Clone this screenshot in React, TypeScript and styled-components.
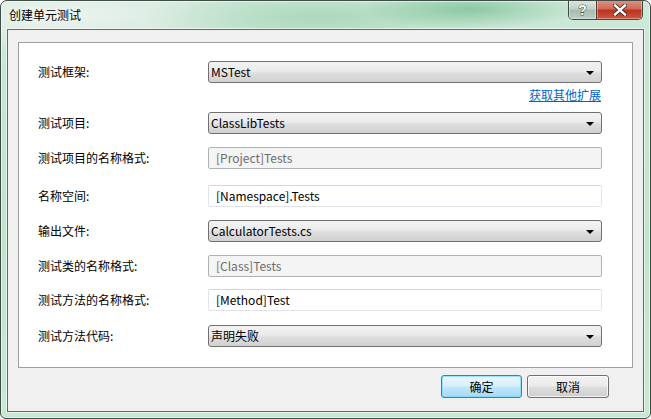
import React from 'react';
import styled, { createGlobalStyle } from 'styled-components';

const Global = createGlobalStyle`
  html, body { margin: 0; padding: 0; background: #ffffff; }
  body { font-family: "Noto Sans CJK SC", "Microsoft YaHei", sans-serif; font-size: 12px; }
  * { box-sizing: border-box; }
`;

const Window = styled.div`
  width: 651px;
  height: 419px;
  display: flex;
  flex-direction: column;
  border: 1px solid #3e4d46;
  border-radius: 7px 7px 6px 6px;
  overflow: hidden;
  padding: 0 6px 6px;
  background:
    radial-gradient(ellipse 110px 20px at 470px 8px, rgba(100, 180, 130, 0.6), transparent),
    radial-gradient(ellipse 180px 30px at 320px 16px, rgba(140, 200, 162, 0.5), transparent),
    radial-gradient(ellipse 200px 40px at 60px 14px, rgba(240, 244, 242, 0.9), transparent),
    linear-gradient(180deg, #cde9d8 0%, #c6e6d2 20%, #c1e4cd 60%, #c8e8d4 100%);
  box-shadow: inset 0 0 0 1px rgba(255, 255, 255, 0.55);
`;

const TitleBar = styled.div`
  height: 28px;
  display: flex;
  align-items: flex-start;
  justify-content: space-between;
`;

const Title = styled.div`
  padding: 6px 0 0 2px;
  font-size: 12px;
  line-height: 16px;
  color: #000;
  text-shadow: 0 0 6px rgba(255, 255, 255, 0.9);
`;

const Caption = styled.div`
  display: flex;
  margin-right: 1px;
  margin-top: -1px;
  border: 1px solid #3f4a45;
  border-top: none;
  border-radius: 0 0 5px 5px;
  overflow: hidden;
  height: 20px;
`;

const CapButton = styled.div<{ $kind: 'help' | 'close' }>`
  display: flex;
  align-items: center;
  justify-content: center;
  height: 100%;
  width: ${(p) => (p.$kind === 'close' ? '46px' : '27px')};
  border-left: ${(p) => (p.$kind === 'close' ? '1px solid #5a3630' : 'none')};
  background: ${(p) =>
    p.$kind === 'close'
      ? 'linear-gradient(180deg, #e19484 0%, #d06a58 45%, #b9341f 55%, #cc5641 100%)'
      : 'linear-gradient(180deg, #dfe7e3 0%, #c2d2c9 45%, #a6bcaf 55%, #bcd0c4 100%)'};
  box-shadow: inset 0 0 0 1px rgba(255, 255, 255, 0.35);
`;

const HelpGlyph = styled.span`
  font-family: "Liberation Sans", Arial, sans-serif;
  font-weight: bold;
  font-size: 14px;
  line-height: 14px;
  color: #ffffff;
  -webkit-text-stroke: 1px #3f4b45;
  paint-order: stroke fill;
`;

const Client = styled.div`
  flex: 1;
  display: flex;
  flex-direction: column;
  border: 1px solid #5d6c65;
  background: #f0f0f0;
  padding: 12px 10px 13px;
  box-shadow: 0 0 0 1px rgba(255, 255, 255, 0.6);
`;

const Panel = styled.div`
  flex: 1;
  background: #ffffff;
  border: 1px solid #a0a0a0;
  padding: 18px 30px 0 19px;
  display: flex;
  flex-direction: column;
`;

const Row = styled.div<{ $mt: number }>`
  display: flex;
  align-items: center;
  height: 22px;
  margin-top: ${(p) => p.$mt}px;
`;

const Label = styled.div`
  width: 170px;
  flex: none;
  color: #000;
  font-size: 12px;
  line-height: 16px;
`;

const Select = styled.div`
  flex: 1;
  height: 22px;
  display: flex;
  align-items: center;
  justify-content: space-between;
  padding: 0 7px 0 2px;
  border: 1px solid #707070;
  border-radius: 3px;
  background: linear-gradient(180deg, #f3f3f3 0%, #ebebeb 45%, #dedede 55%, #d1d1d1 100%);
  color: #000;
  font-size: 12px;
  line-height: 16px;
`;

const Arrow = styled.span`
  width: 0;
  height: 0;
  border-left: 4px solid transparent;
  border-right: 4px solid transparent;
  border-top: 4px solid #000;
  margin-top: 1px;
`;

const Input = styled.div<{ $disabled?: boolean }>`
  flex: 1;
  height: 22px;
  display: flex;
  align-items: center;
  padding: 0 7px;
  font-size: 12px;
  line-height: 16px;
  border: 1px solid ${(p) => (p.$disabled ? '#adb2b5' : '#e2e3ea')};
  border-top-color: ${(p) => (p.$disabled ? '#adb2b5' : '#d5d7dc')};
  border-radius: 2px;
  background: ${(p) => (p.$disabled ? '#f4f4f4' : '#ffffff')};
  color: ${(p) => (p.$disabled ? '#6d6d6d' : '#000000')};
`;

const LinkRow = styled.div`
  display: flex;
  justify-content: flex-end;
  height: 18px;
  margin-top: 3px;
  align-items: center;
`;

const Link = styled.a`
  color: #0066cc;
  text-decoration: underline;
  font-size: 12px;
  line-height: 16px;
  margin-right: 1px;
`;

const Footer = styled.div`
  display: flex;
  justify-content: flex-end;
  gap: 5px;
  margin-top: 7px;
  padding-right: 24px;
`;

const Button = styled.div<{ $primary?: boolean }>`
  width: ${(p) => (p.$primary ? '81px' : '82px')};
  height: 23px;
  display: flex;
  align-items: center;
  justify-content: center;
  border-radius: 3px;
  font-size: 12px;
  color: #000;
  border: 1px solid ${(p) => (p.$primary ? '#3c7fb1' : '#707070')};
  background: ${(p) =>
    p.$primary
      ? 'linear-gradient(180deg, #eaf6fd 0%, #d9f0fc 45%, #bee6fd 55%, #a7d9f5 100%)'
      : 'linear-gradient(180deg, #f2f2f2 0%, #ebebeb 45%, #dddddd 55%, #cfcfcf 100%)'};
  box-shadow: inset 0 0 0 1px ${(p) => (p.$primary ? 'rgba(120, 220, 255, 0.7)' : 'rgba(255,255,255,0.7)')};
`;

export default function App() {
  return (
    <>
      <Global />
      <Window>
        <TitleBar>
          <Title>创建单元测试</Title>
          <Caption>
            <CapButton $kind="help">
              <HelpGlyph>?</HelpGlyph>
            </CapButton>
            <CapButton $kind="close">
              <svg width="14" height="12" viewBox="0 0 14 12">
                <path
                  d="M2 1.5 L7 6 L12 1.5 M2 10.5 L7 6 L12 10.5"
                  stroke="#3b2a26"
                  strokeWidth="4.2"
                  fill="none"
                  strokeLinecap="square"
                />
                <path
                  d="M2 1.5 L7 6 L12 1.5 M2 10.5 L7 6 L12 10.5"
                  stroke="#ffffff"
                  strokeWidth="2.4"
                  fill="none"
                  strokeLinecap="square"
                />
              </svg>
            </CapButton>
          </Caption>
        </TitleBar>
        <Client>
          <Panel>
            <Row $mt={0}>
              <Label>测试框架:</Label>
              <Select>
                MSTest
                <Arrow />
              </Select>
            </Row>
            <LinkRow>
              <Link>获取其他扩展</Link>
            </LinkRow>
            <Row $mt={8}>
              <Label>测试项目:</Label>
              <Select>
                ClassLibTests
                <Arrow />
              </Select>
            </Row>
            <Row $mt={13}>
              <Label>测试项目的名称格式:</Label>
              <Input $disabled>[Project]Tests</Input>
            </Row>
            <Row $mt={16}>
              <Label>名称空间:</Label>
              <Input>[Namespace].Tests</Input>
            </Row>
            <Row $mt={13}>
              <Label>输出文件:</Label>
              <Select>
                CalculatorTests.cs
                <Arrow />
              </Select>
            </Row>
            <Row $mt={13}>
              <Label>测试类的名称格式:</Label>
              <Input $disabled>[Class]Tests</Input>
            </Row>
            <Row $mt={12}>
              <Label>测试方法的名称格式:</Label>
              <Input>[Method]Test</Input>
            </Row>
            <Row $mt={14}>
              <Label>测试方法代码:</Label>
              <Select>
                声明失败
                <Arrow />
              </Select>
            </Row>
          </Panel>
          <Footer>
            <Button $primary>确定</Button>
            <Button>取消</Button>
          </Footer>
        </Client>
      </Window>
    </>
  );
}
